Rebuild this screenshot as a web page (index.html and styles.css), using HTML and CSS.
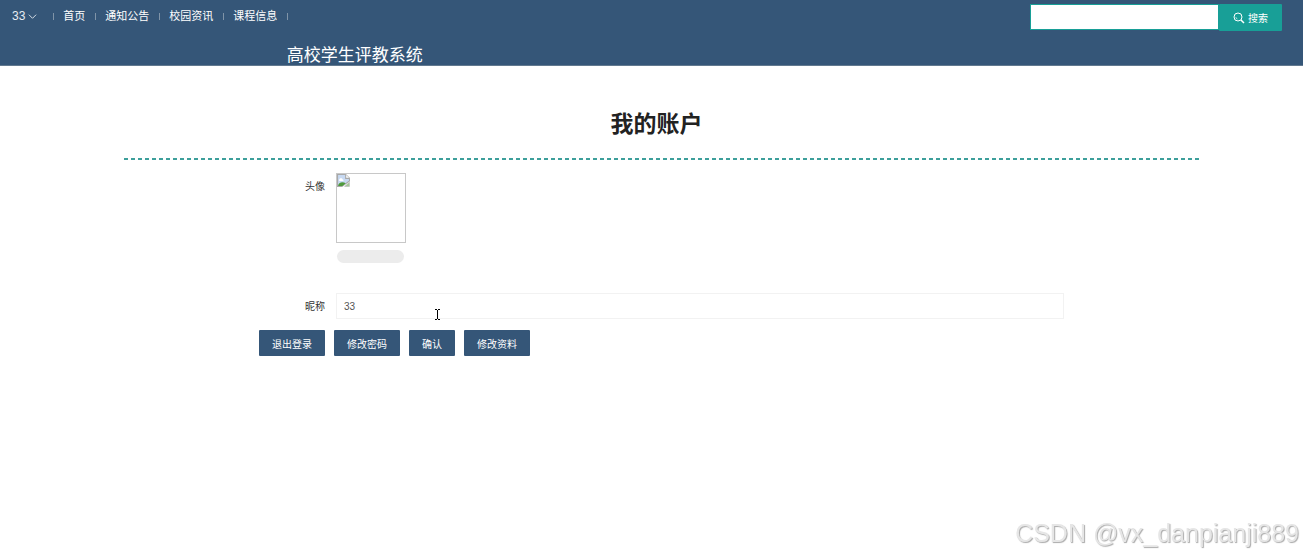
FILE: index.html
```html
<!DOCTYPE html>
<html lang="zh-CN">
<head>
    <meta charset="UTF-8">
    <meta name="viewport" content="width=device-width, initial-scale=1.0">
    <title>高校学生评教系统</title>
    <link rel="stylesheet" href="styles.css">
</head>
<body>
    <header class="header">
        <div class="topbar">
            <button class="user-menu" type="button">33
                <svg class="chevron" viewBox="0 0 10 10" aria-hidden="true"><path d="M1 3l4 4 4-4" fill="none" stroke="currentColor"/></svg>
            </button>
            <nav class="nav">
                <a href="#">首页</a>
                <a href="#">通知公告</a>
                <a href="#">校园资讯</a>
                <a href="#">课程信息</a>
            </nav>
            <form class="search">
                <input type="text" class="search-input" aria-label="搜索">
                <button class="search-btn" type="button">
                    <svg class="search-icon" viewBox="0 0 12 12" aria-hidden="true"><g fill="none" stroke="currentColor"><circle cx="5" cy="5" r="4"/><path d="M2.9 5.2A2 2 0 0 0 4.4 7" stroke-width=".7"/><path d="M8 8l3 3" stroke-width="1.5"/></g></svg>
                    搜索
                </button>
            </form>
        </div>
        <div class="site-title">高校学生评教系统</div>
    </header>

    <main class="main">
        <h1 class="page-title">我的账户</h1>
        <form class="account-form">
            <div class="form-row avatar-row">
                <span class="label">头像</span>
                <div class="upload">
                    <div class="avatar">
                        <svg class="broken" viewBox="0 0 12 12" role="img" aria-label="头像">
                            <path d="M.5.5h7.500l3.500 3.500v2.500L4.500 11.500h-4z" fill="#c7d9f2" stroke="#a9a9a9"/>
                            <path d="M8 .5V4h3.500" fill="#fff" stroke="#a9a9a9"/>
                            <path d="M2 5.500c0-2 3-2 3.200-.5 1.300 0 1.300 1.500 0 1.500H2z" fill="#fff"/>
                            <path d="M1 11c0-3 4-4.500 7-2.500L5 11z" fill="#4f9a3c"/>
                            <path d="M7 11.500l4.500-4v4z" fill="#a5c79a" stroke="#b5b5b5" stroke-width=".5"/>
                        </svg>
                    </div>
                    <div class="progress"></div>
                </div>
            </div>
            <div class="form-row">
                <label class="label" for="nickname">昵称</label>
                <input type="text" class="field" id="nickname" value="33">
            </div>
            <div class="actions">
                <button class="btn" type="button">退出登录</button>
                <button class="btn" type="button">修改密码</button>
                <button class="btn" type="button">确认</button>
                <button class="btn" type="button">修改资料</button>
            </div>
        </form>
    </main>

    <svg class="cursor" viewBox="0 0 5 11" aria-hidden="true"><path d="M0 .5h2M3 .5h2M2.500 1v9M0 10.500h2M3 10.500h2" stroke="#000" fill="none"/></svg>
    <div class="watermark">CSDN @vx_danpianji889</div>
</body>
</html>
```

FILE: styles.css
```css
* {
    margin: 0;
    padding: 0;
    box-sizing: border-box;
}

body {
    background-color: #fff;
    color: #333;
    font-family: "Liberation Sans", "Noto Sans CJK SC", sans-serif;
    font-size: 10px;
}

button,
input {
    font: inherit;
    border: none;
}

button {
    cursor: pointer;
}

.header {
    background-color: #355678;
    border-bottom: 1px solid #62798f;
    color: #fff;
}

.topbar {
    display: flex;
    align-items: flex-start;
    padding: 4px 21px 0 12px;
}

.user-menu {
    display: flex;
    align-items: center;
    gap: 3px;
    margin-right: 16px;
    background: none;
    color: #e6ecf2;
    font-size: 12px;
    line-height: 24px;
}

.chevron {
    width: 9px;
    height: 9px;
}

.nav {
    display: flex;
    align-items: center;
    height: 24px;
}

.nav a {
    display: flex;
    align-items: center;
    gap: 10px;
    padding-left: 9px;
    color: #fff;
    font-size: 11px;
    line-height: 24px;
    text-decoration: none;
}

.nav::before,
.nav a::after {
    content: "";
    width: 1px;
    height: 7px;
    background-color: #8094a8;
}

.search {
    display: flex;
    margin-left: auto;
}

.search-input {
    width: 189px;
    height: 26px;
    padding: 0 8px;
    background-color: #fff;
    border: 1px solid #189f97;
}

.search-btn {
    display: flex;
    align-items: center;
    justify-content: center;
    gap: 3px;
    width: 63px;
    height: 27px;
    background-color: #189f97;
    border-radius: 1px;
    color: #fff;
}

.search-icon {
    width: 12px;
    height: 12px;
}

.site-title {
    margin-left: 22%;
    padding-top: 16px;
    font-size: 17px;
    line-height: 18px;
}

.main {
    margin: 0 104px 0 124px;
}

.page-title {
    padding: 41px 10px 17px 0;
    font-size: 23px;
    line-height: 34px;
    color: #222;
    text-align: center;
}

.account-form {
    padding: 0 135px;
}

.account-form::before {
    content: "";
    display: block;
    height: 2px;
    margin: 0 -135px 13px;
    background: repeating-linear-gradient(to right, #3d9f9b 0, #3d9f9b 4px, transparent 4px, transparent 7px);
}

.form-row {
    display: flex;
    align-items: flex-start;
    gap: 11px;
    margin-bottom: 11px;
}

.avatar-row {
    margin-bottom: 30px;
}

.label {
    width: 66px;
    line-height: 28px;
    height: 26px;
    text-align: right;
}

.avatar {
    width: 70px;
    height: 70px;
    border: 1px solid #c8c8c8;
}

.broken {
    display: block;
    width: 13px;
    height: 13px;
}

.progress {
    width: 67px;
    height: 13px;
    margin: 7px 0 0 1px;
    background-color: #ececec;
    border-radius: 7px;
}

.field {
    flex: 1;
    height: 26px;
    padding: 0 7px;
    border: 1px solid #f2f2f2;
    color: #555;
}

.actions {
    display: flex;
    gap: 9px;
}

.btn {
    height: 26px;
    padding: 0 13px;
    background-color: #355678;
    border-radius: 1px;
    color: #fff;
}

.cursor {
    position: absolute;
    top: 309px;
    left: 435px;
    width: 5px;
    height: 11px;
}

.watermark {
    position: fixed;
    right: 4px;
    bottom: 7px;
    color: #e6e6e6;
    font-size: 25px;
    line-height: 30px;
    text-shadow: 1px 1px 1px #aaa;
}
```
